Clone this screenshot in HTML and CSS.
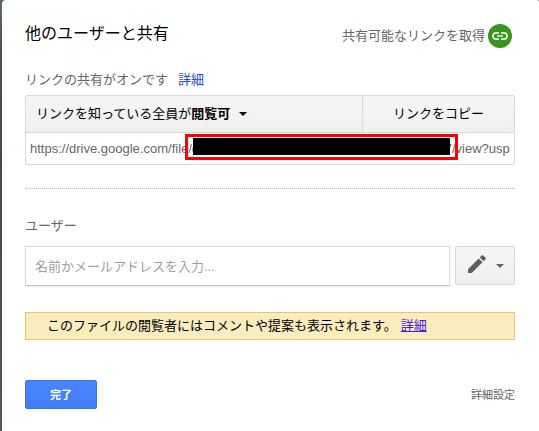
FILE: index.html
```html
<!DOCTYPE html>
<html lang="ja">
<head>
<meta charset="utf-8">
<title>他のユーザーと共有</title>
<link rel="stylesheet" href="styles.css">
</head>
<body>
<main class="dialog">
  <header class="header">
    <h1 class="title">他のユーザーと共有</h1>
    <button class="get-link" type="button">共有可能なリンクを取得
      <svg class="link-icon" viewBox="0 0 24 24" aria-hidden="true">
        <circle cx="12" cy="12" r="12" fill="#3d9320"/>
        <path d="M11 8.800H8.200a3.200 3.200 0 0 0 0 6.400H11M13 8.800h2.800a3.200 3.200 0 0 1 0 6.400H13M9 12h6" fill="none" stroke="#e4f3df" stroke-width="1.700"/>
      </svg>
    </button>
  </header>

  <p class="status">リンクの共有がオンです<a class="more" href="#">詳細</a></p>

  <section class="link-box">
    <div class="link-actions">
      <button class="access" type="button"><span>リンクを知っている全員が<b>閲覧可</b></span><span class="caret"></span></button>
      <button class="copy" type="button">リンクをコピー</button>
    </div>
    <div class="url-row">
      <input class="url" type="text" readonly aria-label="共有リンク" value="https://drive.google.com/file/d                                                                    7/view?usp">
      <span class="redaction"></span>
    </div>
  </section>

  <hr class="divider">

  <label class="label" for="people">ユーザー</label>
  <div class="invite">
    <input class="people" id="people" type="text" placeholder="名前かメールアドレスを入力...">
    <button class="role" type="button" aria-label="編集者">
      <svg class="pencil" viewBox="0 0 18 18" aria-hidden="true">
        <path d="M0 14.200V18h3.800L14.500 7.300 10.700 3.500zM17.500 4.300a1.200 1.200 0 0 0 0-1.600L15.300.5a1.200 1.200 0 0 0-1.600 0L11.800 2.400l3.800 3.800z" fill="#5f5f5f"/>
      </svg>
      <span class="caret"></span>
    </button>
  </div>

  <p class="notice">このファイルの閲覧者にはコメントや提案も表示されます。<a class="notice-link" href="#">詳細</a></p>

  <footer class="footer">
    <button class="done" type="button">完了</button>
    <a class="advanced" href="#">詳細設定</a>
  </footer>
</main>
</body>
</html>
```
FILE: styles.css
```css
* {
  box-sizing: border-box;
}

body {
  margin: 0;
  background: linear-gradient(#5d6975, #505050 50px, #484848 160px, #555);
  font-family: "Liberation Sans", "Noto Sans CJK JP", sans-serif;
  font-size: 13px;
  line-height: 20px;
  color: #000;
}

button,
input {
  margin: 0;
  padding: 0;
  border: 0;
  font: inherit;
  color: inherit;
  background: none;
}

.dialog {
  min-height: 100vh;
  margin-left: 2px;
  padding: 22px 24px 20px 23px;
  border-radius: 4px 2px 0 0;
  background: #fff;
}

.header {
  display: flex;
  align-items: flex-start;
  justify-content: space-between;
}

.title {
  margin: 0;
  font-size: 16px;
  font-weight: 400;
  line-height: 24px;
}

.get-link {
  display: flex;
  align-items: center;
  gap: 3px;
  padding-top: 2px;
  margin-right: 3px;
  color: #666;
}

.link-icon {
  width: 24px;
  height: 24px;
}

.status {
  margin: 22px 0 5px;
  color: #666;
}

.more {
  margin-left: 10px;
  color: #1a4be0;
  text-decoration: none;
}

.link-box {
  border: 1px solid #d9d9d9;
  border-radius: 2px;
}

.link-actions {
  display: flex;
  height: 37px;
  border-bottom: 1px solid #d9d9d9;
  background: linear-gradient(#f5f5f5, #f0f0f0);
}

.access {
  display: flex;
  flex: 1;
  align-items: center;
  gap: 9px;
  padding-left: 10px;
}

.copy {
  flex: 0 0 152px;
  border-left: 1px solid #d9d9d9;
}

.caret {
  border: 4px solid transparent;
  border-top-color: currentColor;
  border-bottom: 0;
}

.url-row {
  position: relative;
  display: flex;
  height: 31px;
  padding: 0 4px;
}

.url {
  flex: 1;
  min-width: 0;
  color: #666;
  outline: 0;
}

.redaction {
  position: absolute;
  top: 1px;
  left: 159px;
  width: 273px;
  height: 26px;
  padding: 1px 5px 2px;
  border: 3px solid #f00;
  background: #000 content-box;
}

.divider {
  margin: 23px 0 27px;
  border: 0;
  border-top: 1px dotted #bbb;
}

.label {
  display: block;
  margin-bottom: 10px;
  color: #666;
}

.invite {
  display: flex;
  align-items: flex-start;
  gap: 5px;
}

.people {
  flex: 1;
  min-width: 0;
  height: 40px;
  padding: 0 9px;
  border: 1px solid #d9d9d9;
  border-bottom-color: #c6c6c6;
  box-shadow: 0 1px 1px #eee;
}

.people::placeholder {
  color: #a0a0a0;
  opacity: 1;
}

.role {
  display: flex;
  align-items: center;
  justify-content: space-between;
  width: 60px;
  height: 39px;
  padding: 0 10px 0 12px;
  border: 1px solid #d9d9d9;
  border-radius: 2px;
  background: linear-gradient(#f5f5f5, #f0f0f0);
  color: #666;
}

.pencil {
  width: 18px;
  height: 18px;
  margin-bottom: 3px;
}

.notice {
  margin: 26px 0 40px;
  padding: 3px 21px;
  border: 1px solid #f0c36d;
  background: #f9edbe;
}

.notice-link {
  margin-left: 4px;
  color: #4318e8;
}

.footer {
  display: flex;
  align-items: center;
  justify-content: space-between;
  font-size: 11px;
}

.done {
  width: 72px;
  height: 29px;
  border: 1px solid #3079ed;
  border-radius: 2px;
  background: linear-gradient(#4986ff, #427df5);
  color: #fff;
  font-weight: 700;
}

.advanced {
  color: #666;
  text-decoration: none;
}
```
